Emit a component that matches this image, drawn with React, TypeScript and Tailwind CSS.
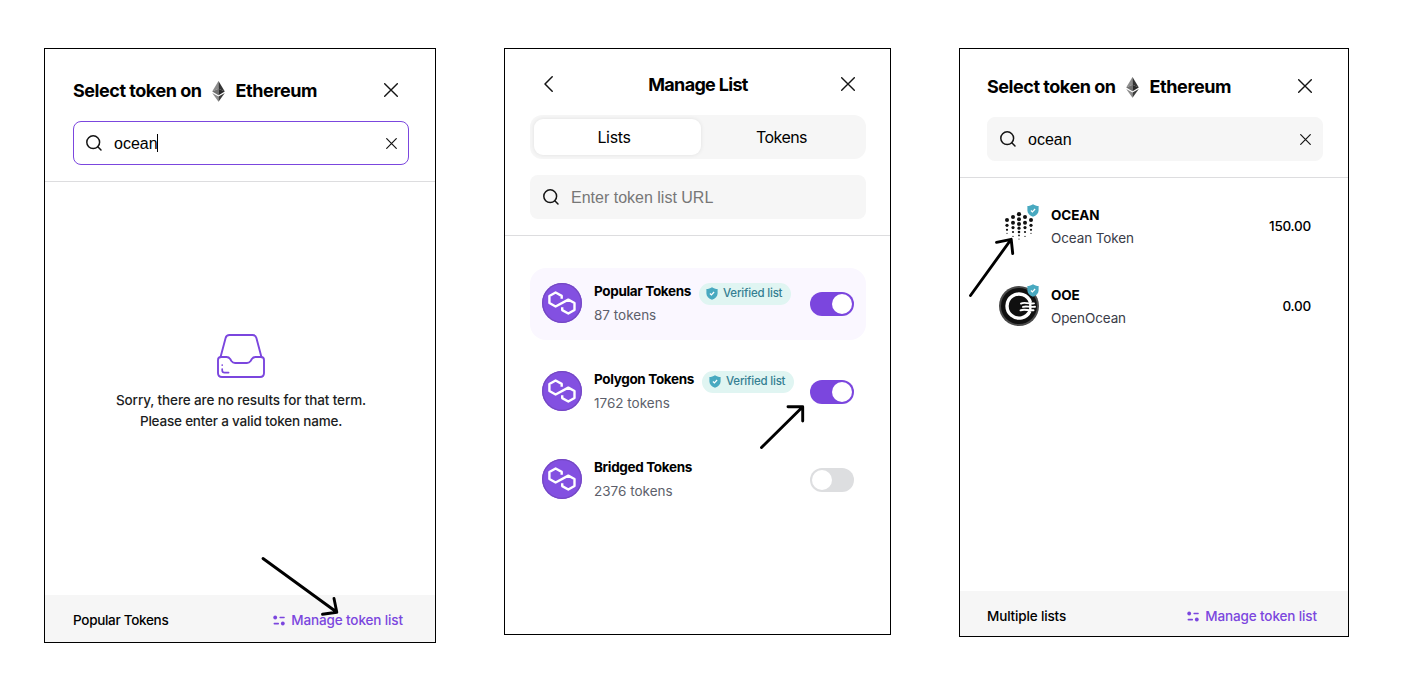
import type { ReactNode } from "react";

const CloseIcon = ({ size = 14, width = 1.4 }: { size?: number; width?: number }) => (
  <svg width={size} height={size} viewBox={`0 0 ${size} ${size}`} fill="none" stroke="#141414" strokeWidth={width} strokeLinecap="round">
    <path d={`M.7.7 ${size - 0.7} ${size - 0.7}M${size - 0.7}.7.7 ${size - 0.7}`} />
  </svg>
);

const SearchIcon = () => (
  <svg width="18" height="18" viewBox="0 0 18 18" fill="none" stroke="#141414" strokeWidth="1.5" strokeLinecap="round">
    <circle cx="8.2" cy="8.2" r="6.4" />
    <path d="M12.8 12.8 16 16" />
  </svg>
);

const EthIcon = () => (
  <svg width="13" height="21" viewBox="0 0 13 21">
    <path d="M6.5 0 0.2 10.6 6.5 7.8z" fill="#8c8c8c" />
    <path d="M6.5 0 12.8 10.6 6.5 7.8z" fill="#343434" />
    <path d="M6.5 7.8 0.2 10.6 6.5 14.3z" fill="#6f6f6f" />
    <path d="M6.5 7.8 12.8 10.6 6.5 14.3z" fill="#2a2a2a" />
    <path d="M0.2 11.9 6.5 15.6V20.8z" fill="#8c8c8c" />
    <path d="M12.8 11.9 6.5 15.6V20.8z" fill="#3c3c3b" />
  </svg>
);

const InboxIcon = () => (
  <svg width="50" height="46" viewBox="0 0 50 46" fill="none" stroke="#7b46de" strokeWidth="1.9" strokeLinecap="round" strokeLinejoin="round">
    <path d="M4.5 24.2 9.6 5Q10.4 2 13.5 2H36.5Q39.6 2 40.4 5L45.5 24.2" />
    <path d="M5 24H10.5q2.3 0 3.7 2l1.2 2q1.4 2 3.7 2h11.8q2.3 0 3.7-2l1.2-2q1.4-2 3.7-2H45Q48 24 48 27V40Q48 44 44 44H6Q2 44 2 40V27Q2 24 5 24Z" />
    <path d="M6.2 32v.1M6.2 36v1.2Q6.2 39.6 8.6 39.6H12.6" strokeWidth="1.7" />
  </svg>
);

const ListIcon = () => (
  <svg width="12" height="11" viewBox="0 0 12 11" fill="#7b46de">
    <circle cx="2.2" cy="2.5" r="1.9" />
    <rect x="6.4" y="1.7" width="5.4" height="1.6" rx=".7" />
    <rect x="0.6" y="7.8" width="5.4" height="1.6" rx=".7" />
    <circle cx="9.8" cy="8.5" r="1.9" />
  </svg>
);

const ShieldIcon = ({ className }: { className?: string }) => (
  <svg className={className} width="12" height="13" viewBox="0 0 12 13">
    <path d="M6 .2C7.8 1.3 9.6 1.9 11.6 2V6.4C11.6 9.4 9.3 11.5 6 12.8 2.7 11.5.4 9.4.4 6.4V2C2.4 1.9 4.2 1.3 6 .2Z" fill="#48a9c0" />
    <path d="M3.9 6.5 5.4 7.9 8.1 5" fill="none" stroke="#fff" strokeWidth="1.2" />
  </svg>
);

const PolygonIcon = () => (
  <svg width="40" height="40" viewBox="0 0 40 40" fill="none">
    <circle cx="20" cy="20" r="20" fill="#8350e1" />
    <circle cx="20" cy="20" r="19.3" stroke="#7448c2" strokeWidth="1.2" />
    <path
      d="M19.7 15.8V12.9L13.6 9.5 7.4 13V20L13.6 23.5 26.3 16.6 32.5 20V27L26.3 30.5 20.2 27.1V24.2"
      stroke="#fff"
      strokeWidth="2.4"
      strokeLinejoin="round"
    />
  </svg>
);

const oceanColumns: [number, [number, number][]][] = [
  [8, [[14, 2], [19.3, 1.6], [23.8, 1.1], [27.3, 0.6]]],
  [14, [[11, 2], [16.7, 2], [21.6, 1.6], [26, 1.1], [30.4, 0.6]]],
  [20, [[8.2, 2.1], [13.3, 2], [17.9, 2], [22.2, 1.6], [26, 1.3], [29.4, 0.9], [33, 0.6]]],
  [26, [[11, 2], [16.7, 2], [21.6, 1.6], [26, 1.1], [30.4, 0.6]]],
  [32, [[14, 2], [19.3, 1.6], [23.8, 1.1], [27.3, 0.6]]],
];

const OceanIcon = () => (
  <svg width="40" height="40" viewBox="0 0 40 40" fill="#111">
    {oceanColumns.map(([x, dots]) => dots.map(([y, r]) => <circle key={`${x}-${y}`} cx={x} cy={y} r={r} />))}
  </svg>
);

const OpenOceanIcon = () => (
  <svg width="40" height="40" viewBox="0 0 40 40" fill="none">
    <circle cx="20" cy="20" r="20" fill="#4a4a4a" />
    <circle cx="20" cy="20" r="18" fill="#101010" />
    <path d="M31.4 16.2A12 12 0 1 0 31 25" stroke="#fff" strokeWidth="3.4" />
    <path d="M22 17.6C25 15.8 28 17.8 35 17.4M24 20.9C27 19.9 30 21.2 36 20.8M21.5 24.3C25 22.8 29 24.6 34.5 24.2" stroke="#fff" strokeWidth="1.9" strokeLinecap="round" />
    <path d="M31.3 16V25" stroke="#fff" strokeWidth="2.4" />
  </svg>
);

function SelectHeader({ focused = false }: { focused?: boolean }) {
  return (
    <>
      <div className="flex h-10 w-[336px] items-center pr-[11px]">
        <span className="mb-0.5 w-[129px] whitespace-nowrap text-[18px] font-bold tracking-[-0.46px]">Select token on</span>
        <span className="ml-2.5"><EthIcon /></span>
        <span className="mb-0.5 ml-[10.5px] whitespace-nowrap text-[18px] font-bold tracking-[-0.4px]">Ethereum</span>
        <span className="mb-[3px] ml-auto"><CloseIcon /></span>
      </div>
      <div
        className={
          focused
            ? "mt-2.5 flex h-11 w-[336px] items-center rounded-lg border border-[#7b46de] bg-white pr-[11.5px] pl-[11px]"
            : "mt-2.5 flex h-11 w-[336px] items-center rounded-lg border border-[#f6f6f6] bg-[#f6f6f6] pr-[11.5px] pl-[11px]"
        }
      >
        <SearchIcon />
        <span className="mt-0.5 ml-[11px] font-['Liberation_Sans',sans-serif] text-base">ocean</span>
        {focused && <span className="-ml-px h-[18px] w-px bg-black" />}
        <span className="ml-auto"><CloseIcon size={11} width={1.2} /></span>
      </div>
    </>
  );
}

function Footer({ label, className }: { label: ReactNode; className: string }) {
  return (
    <div className={className}>
      {label}
      <span className="flex items-center gap-1.5 text-[13.5px] font-medium tracking-[-0.12px] text-[#7b46de]">
        <ListIcon />
        Manage token list
      </span>
    </div>
  );
}

function Toggle({ on }: { on: boolean }) {
  return (
    <span
      className={
        on
          ? "ml-auto flex h-6 w-11 justify-end rounded-full bg-[#7b46de] p-0.5"
          : "ml-auto flex h-6 w-11 rounded-full bg-[#dddee0] p-0.5"
      }
    >
      <span className="size-5 rounded-full bg-white" />
    </span>
  );
}

function ListRow({ name, count, verified, on, highlight }: { name: string; count: string; verified?: boolean; on: boolean; highlight?: boolean }) {
  return (
    <div className={highlight ? "flex h-[72px] items-center rounded-2xl bg-[#faf7ff] px-3" : "flex h-[72px] items-center rounded-2xl px-3"}>
      <span className="mb-[3px]"><PolygonIcon /></span>
      <div className="ml-3 flex h-12 flex-col">
        <div className="flex h-6 items-center">
          <span className="mb-px text-[13.5px] font-bold tracking-[-0.34px]">{name}</span>
          {verified && (
            <span className="mt-[3px] ml-2 flex h-[22px] w-[92px] items-center rounded-full bg-[#e0f5f2] pl-[7px] text-[11.5px] font-medium tracking-[-0.2px] whitespace-nowrap text-[#357f92]">
              <ShieldIcon className="mr-[5px]" />
              Verified list
            </span>
          )}
        </div>
        <span className="text-[13.5px] leading-[22px] text-[#5d5f6b]">{count}</span>
      </div>
      <Toggle on={on} />
    </div>
  );
}

function TokenRow({ icon, symbol, name, balance }: { icon: ReactNode; symbol: string; name: string; balance: string }) {
  return (
    <div className="flex h-20 items-center px-3">
      <span className="relative">
        {icon}
        <ShieldIcon className="absolute -top-[2px] right-0" />
      </span>
      <div className="ml-3 flex flex-col">
        <span className="text-[13.5px] leading-6 font-bold tracking-[-0.1px]">{symbol}</span>
        <span className="text-[13.5px] leading-[22px] tracking-[-0.12px] text-[#3a3c48]">{name}</span>
      </div>
      <span className="ml-auto text-[13.5px] font-medium tracking-[-0.25px]">{balance}</span>
    </div>
  );
}

export default function App() {
  return (
    <main className="relative flex h-[686px] w-[1416px] items-start gap-[68px] overflow-hidden bg-white pt-12 pl-11 font-[Inter,sans-serif] text-black">
      <section className="flex h-[595px] w-[392px] flex-col border border-black">
        <div className="h-[133px] border-b border-[#dddddf] pt-[22px] pl-7">
          <SelectHeader focused />
        </div>
        <div className="flex flex-1 flex-col items-center pt-[151px] pl-0.5 text-[#1c1d22]">
          <InboxIcon />
          <p className="mt-[11px] text-center text-[13.5px] leading-[21px] font-medium tracking-[-0.12px]">
            Sorry, there are no results for that term.
            <br />
            <span className="tracking-[-0.2px]">Please enter a valid token name.</span>
          </p>
        </div>
        <Footer
          label={<span className="text-[13.5px] font-medium tracking-[-0.3px]">Popular Tokens</span>}
          className="flex h-[47px] items-center justify-between bg-[#f6f6f6] pt-1 pr-8 pl-7"
        />
      </section>

      <section className="flex h-[587px] w-[387px] flex-col border border-black">
        <div className="h-[187px] border-b border-[#dddddf] px-[25px] pt-4">
          <div className="flex h-10 w-[336px] items-center justify-between pr-[11px] pl-[14px]">
            <svg className="mb-[3px]" width="9" height="16" viewBox="0 0 9 16" fill="none" stroke="#141414" strokeWidth="1.5" strokeLinecap="round" strokeLinejoin="round">
              <path d="M8.2.8 1 8l7.2 7.2" />
            </svg>
            <span className="mb-0.5 ml-0.5 text-[18px] font-bold tracking-[-0.68px]">Manage List</span>
            <span className="mb-[3px]"><CloseIcon /></span>
          </div>
          <div className="mt-2.5 flex h-11 w-[336px] rounded-xl bg-[#f6f6f6] p-1 text-base tracking-[-0.35px]">
            <span className="flex w-[167px] items-center justify-center rounded-[9px] bg-white pr-[7px] shadow-[0_0_4px_rgba(0,0,0,0.09)]">Lists</span>
            <span className="flex flex-1 items-center justify-center tracking-[-0.55px]">Tokens</span>
          </div>
          <div className="mt-4 flex h-11 w-[336px] items-center rounded-lg bg-[#f6f6f6] pl-3">
            <SearchIcon />
            <span className="mt-0.5 ml-[11px] font-['Liberation_Sans',sans-serif] text-base text-[#777]">Enter token list URL</span>
          </div>
        </div>
        <div className="flex w-[361px] flex-col gap-4 pt-8 pl-[25px]">
          <ListRow highlight on verified count="87 tokens" name="Popular Tokens" />
          <ListRow on verified count="1762 tokens" name="Polygon Tokens" />
          <ListRow on={false} count="2376 tokens" name="Bridged Tokens" />
        </div>
      </section>

      <section className="flex h-[589px] w-[390px] flex-col border border-black">
        <div className="h-[129px] border-b border-[#dddddf] pt-[18px] pl-[27px]">
          <SelectHeader />
        </div>
        <div className="flex w-[363px] flex-1 flex-col pt-2 pl-[27px]">
          <TokenRow icon={<OceanIcon />} symbol="OCEAN" name="Ocean Token" balance="150.00" />
          <TokenRow icon={<OpenOceanIcon />} symbol="OOE" name="OpenOcean" balance="0.00" />
        </div>
        <Footer
          label={<span className="text-[13.5px] font-medium tracking-[-0.15px]">Multiple lists</span>}
          className="flex h-[45px] items-center justify-between bg-[#f6f6f6] pt-1.5 pr-[31px] pl-[27px]"
        />
      </section>

      <svg className="pointer-events-none absolute inset-0" width="1416" height="686" fill="none" stroke="#000" strokeWidth="2.9" strokeLinecap="round" strokeLinejoin="round">
        <path d="M263 558.5 336.5 612M334 598.5 336.8 612.3 322.5 614.3" />
        <path d="M761.5 447.5 802.5 407M788 406.7H802.7V421" />
        <path d="M970.5 295.5 1011 239.5M996.5 242.3 1011.2 239.3 1012.7 253.5" />
      </svg>
    </main>
  );
}
